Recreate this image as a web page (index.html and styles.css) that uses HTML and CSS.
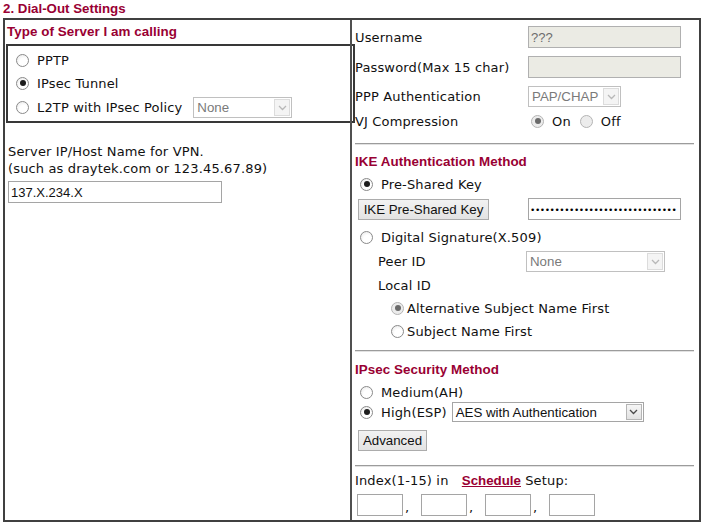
FILE: index.html
```html
<!DOCTYPE html>
<html>
<head>
<meta charset="utf-8">
<link rel="stylesheet" href="styles.css">
</head>
<body>
<div class="title">2. Dial-Out Settings</div>
<div class="frame">
  <div class="left">
    <div class="heading lh">Type of Server I am calling</div>
    <div class="typebox">
      <div class="row r18"><span class="radio"></span><span class="lbl">PPTP</span></div>
      <div class="row r18"><span class="radio on"></span><span class="lbl">IPsec Tunnel</span></div>
      <div class="row r21"><span class="radio"></span><span class="lbl">L2TP with IPsec Policy</span>
        <span class="select dis policy"><span class="sv">None</span><span class="arrow"><svg width="9" height="6" viewBox="0 0 9 6"><path d="M1 1 L4.5 4.5 L8 1" fill="none" stroke="#b8b8b8" stroke-width="1.3"/></svg></span></span>
      </div>
    </div>
    <div class="hostlabel">Server IP/Host Name for VPN.<br>(such as draytek.com or 123.45.67.89)</div>
    <div class="field host">137.X.234.X</div>
  </div>
  <div class="right">
    <div class="frow user"><span class="flabel">Username</span><span class="field dis wide">???</span></div>
    <div class="frow pass"><span class="flabel">Password(Max 15 char)</span><span class="field dis wide"></span></div>
    <div class="frow ppp"><span class="flabel">PPP Authentication</span>
      <span class="select dis pap"><span class="sv">PAP/CHAP</span><span class="arrow"><svg width="9" height="6" viewBox="0 0 9 6"><path d="M1 1 L4.5 4.5 L8 1" fill="none" stroke="#b8b8b8" stroke-width="1.3"/></svg></span></span>
    </div>
    <div class="frow vj"><span class="flabel">VJ Compression</span>
      <span class="radio dis on vjon"></span><span class="lbl onl">On</span>
      <span class="radio dis vjoff"></span><span class="lbl">Off</span>
    </div>
    <div class="rule r1"></div>
    <div class="heading ike">IKE Authentication Method</div>
    <div class="row r18 psk"><span class="radio on"></span><span class="lbl">Pre-Shared Key</span></div>
    <div class="frow keyrow"><span class="btn ikebtn">IKE Pre-Shared Key</span><span class="field wide dots">••••••••••••••••••••••••••••••</span></div>
    <div class="row r18 dig"><span class="radio"></span><span class="lbl">Digital Signature(X.509)</span></div>
    <div class="frow peer"><span class="flabel sub">Peer ID</span>
      <span class="select dis peersel"><span class="sv">None</span><span class="arrow"><svg width="9" height="6" viewBox="0 0 9 6"><path d="M1 1 L4.5 4.5 L8 1" fill="none" stroke="#b8b8b8" stroke-width="1.3"/></svg></span></span>
    </div>
    <div class="row r18 local"><span class="lbl sub">Local ID</span></div>
    <div class="row r18 alt"><span class="radio dis on"></span><span class="lbl">Alternative Subject Name First</span></div>
    <div class="row r18 subj"><span class="radio"></span><span class="lbl">Subject Name First</span></div>
    <div class="rule r2"></div>
    <div class="heading ipsec">IPsec Security Method</div>
    <div class="row r18 med"><span class="radio"></span><span class="lbl">Medium(AH)</span></div>
    <div class="row high"><span class="radio on"></span><span class="lbl">High(ESP)</span>
      <span class="select aes"><span class="sv">AES with Authentication</span><span class="arrow en"><svg width="9" height="6" viewBox="0 0 9 6"><path d="M1 1 L4.5 4.5 L8 1" fill="none" stroke="#4a4a4a" stroke-width="1.3"/></svg></span></span>
    </div>
    <div class="adv"><span class="btn advbtn">Advanced</span></div>
    <div class="rule r3"></div>
    <div class="index">Index(1-15) in <a class="sched">Schedule</a> Setup:</div>
    <div class="slots">
      <span class="field slot"></span><span class="comma">,</span>
      <span class="field slot"></span><span class="comma">,</span>
      <span class="field slot"></span><span class="comma">,</span>
      <span class="field slot"></span>
    </div>
  </div>
</div>
</body>
</html>
```

FILE: styles.css
```css
html, body {
  margin: 0;
  padding: 0;
  background: #fff;
}
body {
  width: 705px;
  height: 525px;
  overflow: hidden;
  font-family: "DejaVu Sans", Verdana, sans-serif;
  font-size: 13px;
  letter-spacing: 0.15px;
  color: #111;
}
.title {
  height: 18px;
  line-height: 17px;
  padding-left: 3px;
  font-family: "Liberation Sans", Arial, sans-serif;
  font-weight: bold;
  font-size: 13.3px;
  letter-spacing: 0;
  color: #990033;
}
.frame {
  margin-left: 3px;
  width: 694px;
  border: 2px solid #404040;
  display: grid;
  grid-template-columns: 345px 347px;
}
.left {
  padding: 0 3px 0 1px;
}
.right {
  border-left: 2px solid #505050;
  padding: 0 3px 4px 3px;
  display: flex;
  flex-direction: column;
}
.heading {
  height: 16px;
  line-height: 16px;
  font-family: "Liberation Sans", Arial, sans-serif;
  font-weight: bold;
  font-size: 13.4px;
  letter-spacing: 0.05px;
  color: #990033;
}
.left .heading {
  margin-top: 4px;
  padding-left: 1px;
}
.typebox {
  margin-top: 4px;
  width: 337px;
  border: 2px solid #383838;
  padding: 0 0 3px 8px;
}
.row {
  display: flex;
  align-items: center;
}
.r18 { height: 18px; margin-top: 5px; }
.r21 { height: 21px; margin-top: 5px; }
.radio {
  flex: none;
  display: inline-block;
  position: relative;
  box-sizing: border-box;
  width: 13px;
  height: 13px;
  border-radius: 50%;
  border: 1px solid #8a8a8a;
  background: radial-gradient(circle at 60% 65%, #ffffff 40%, #e4e4e4 100%);
}
.radio.on::after {
  content: "";
  position: absolute;
  left: 2.5px;
  top: 2.5px;
  width: 6px;
  height: 6px;
  border-radius: 50%;
  background: #1c1c1c;
}
.radio.dis {
  border-color: #b4b4b4;
  background: #ececec;
}
.radio.dis.on::after {
  background: #6a6a6a;
}
.lbl {
  margin-left: 8px;
  white-space: nowrap;
}
.field {
  display: inline-flex;
  align-items: center;
  box-sizing: border-box;
  height: 22px;
  border: 1px solid #a5a5a5;
  background: #fff;
  padding-left: 2px;
  font-family: "Liberation Sans", Arial, sans-serif;
  font-size: 13px;
  letter-spacing: 0;
  color: #111;
  overflow: hidden;
  white-space: nowrap;
}
.field.dis {
  background: #ebebe4;
  border-color: #b0b0b0;
  color: #6d6d6d;
}
.select {
  display: inline-flex;
  align-items: stretch;
  box-sizing: border-box;
  height: 21px;
  border: 1px solid #a5a5a5;
  background: #fff;
  font-family: "Liberation Sans", Arial, sans-serif;
  font-size: 13.3px;
  letter-spacing: 0;
}
.select .sv {
  flex: 1;
  display: flex;
  align-items: center;
  padding-left: 3px;
  white-space: nowrap;
  overflow: hidden;
}
.select.dis {
  border-color: #c0c0c0;
  color: #7a7a7a;
}
.select .arrow {
  flex: none;
  width: 16px;
  margin: 1px;
  box-sizing: border-box;
  border: 1px solid #dcdcdc;
  background: #f4f4f4;
  display: flex;
  align-items: center;
  justify-content: center;
}
.select .arrow.en {
  border-color: #b5b5b5;
  background: linear-gradient(#f6f6f6, #e2e2e2);
}
.policy {
  margin-left: 11px;
  width: 99px;
}
.hostlabel {
  margin-top: 20px;
  padding-left: 2px;
  line-height: 17px;
  white-space: nowrap;
}
.host {
  margin-top: 4px;
  margin-left: 2px;
  width: 214px;
}
.frow {
  display: flex;
  align-items: center;
}
.flabel {
  width: 173px;
  flex: none;
  white-space: nowrap;
}
.flabel.sub {
  width: 148px;
  padding-left: 23px;
}
.wide { width: 153px; }
.user { margin-top: 6px; height: 22px; }
.pass { margin-top: 8px; height: 22px; }
.ppp { margin-top: 8px; height: 21px; }
.pap { width: 93px; }
.vj { margin-top: 4px; height: 20px; }
.vjon { margin-left: 3px; }
.onl { margin-right: 9px; }
.rule {
  height: 0;
  border-top: 1px solid #9c9c9c;
  border-bottom: 1px solid #e2e2e2;
}
.r1 { margin-top: 12px; }
.ike { margin-top: 9px; }
.psk { margin-top: 5px; padding-left: 5px; }
.btn {
  display: inline-flex;
  align-items: center;
  justify-content: center;
  box-sizing: border-box;
  height: 21px;
  border: 1px solid #acacac;
  background: linear-gradient(#f2f2f2, #e3e3e3);
  font-family: "Liberation Sans", Arial, sans-serif;
  font-size: 13.3px;
  letter-spacing: 0;
  color: #111;
  white-space: nowrap;
}
.keyrow { margin-top: 5px; height: 22px; }
.ikebtn { width: 131px; margin-left: 3px; margin-right: 39px; }
.dots {
  font-size: 9.5px;
  letter-spacing: 1.55px;
  padding-left: 2px;
  color: #000;
}
.dig { margin-top: 8px; padding-left: 5px; }
.peer { margin-top: 5px; height: 21px; }
.peersel { width: 139px; }
.local { margin-top: 4px; }
.local .sub { margin-left: 23px; }
.alt { margin-top: 5px; padding-left: 36px; }
.alt .lbl, .subj .lbl { margin-left: 3px; }
.subj { margin-top: 5px; padding-left: 36px; }
.r2 { margin-top: 10px; }
.ipsec { margin-top: 10px; }
.med { margin-top: 5px; padding-left: 5px; }
.high { margin-top: 1px; height: 20px; padding-left: 5px; }
.aes { width: 192px; height: 20px; margin-left: 5px; color: #111; }
.adv { margin-top: 8px; height: 21px; display: flex; }
.advbtn { width: 69px; margin-left: 3px; }
.r3 { margin-top: 14px; }
.index {
  margin-top: 6px;
  height: 16px;
  line-height: 16px;
  white-space: nowrap;
}
.sched {
  margin-left: 9px;
  font-family: "Liberation Sans", Arial, sans-serif;
  font-weight: bold;
  font-size: 13.3px;
  letter-spacing: 0;
  color: #990033;
  text-decoration: underline;
}
.slots {
  margin-top: 5px;
  height: 22px;
  display: flex;
  align-items: flex-end;
  padding-left: 2px;
}
.slot { width: 46px; }
.comma {
  width: 18px;
  padding-left: 2px;
  box-sizing: border-box;
  line-height: 16px;
}
```
